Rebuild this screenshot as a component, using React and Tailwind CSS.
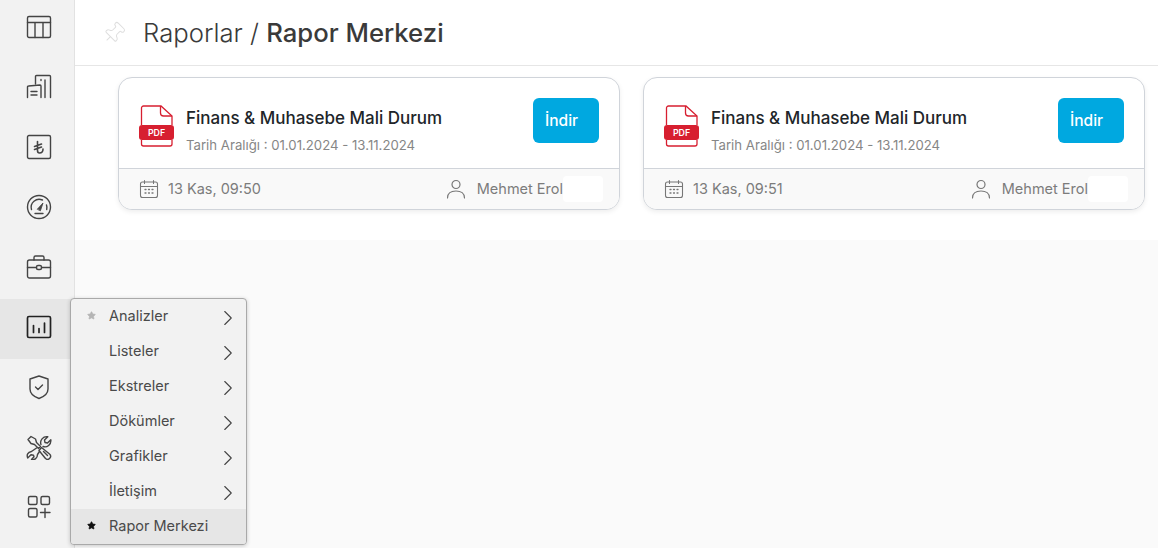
import { ChevronRight, Pin, Star } from 'lucide-react';

const FONT = "font-['Inter','Liberation_Sans',sans-serif]";

const iconProps = {
  width: 26,
  height: 26,
  viewBox: '0 0 26 26',
  fill: 'none',
  stroke: '#444',
  strokeWidth: 1.4,
  strokeLinecap: 'round',
  strokeLinejoin: 'round',
};

function TableIcon() {
  return (
    <svg {...iconProps}>
      <rect x="1.5" y="2.5" width="23" height="21" rx="1.5" />
      <path d="M1.5 8.500h23M9 8.500v15M17 8.500v15" />
    </svg>
  );
}

function BuildingIcon() {
  return (
    <svg {...iconProps}>
      <path d="M9.500 10V2.500a1 1 0 0 1 1-1h13a1 1 0 0 1 1 1V23.500" />
      <path d="M1.500 23.500V13a1 1 0 0 1 1-1l11.500-1a1 1 0 0 1 1 1v11.500" />
      <path d="M5 17.500h6M5 21h6M15 5.500v1M19 6v17.500" />
    </svg>
  );
}

function LiraIcon() {
  return (
    <svg {...iconProps}>
      <rect x="1.5" y="1.500" width="23" height="23" rx="1.5" />
      <path d="M11.500 7.500v9c0 1.800 .8 2.500 2 2.500 2 0 3.500-1.500 3.500-4M8.500 12.500l7-2.500M8.500 15.500l7-2.500" strokeWidth="1.600" />
    </svg>
  );
}

function GaugeIcon() {
  return (
    <svg {...iconProps}>
      <circle cx="13" cy="13" r="11.500" />
      <path d="M5.500 15.500a8 8 0 0 1 11-9.500M20.500 11a8 8 0 0 1 .2 4.500" />
      <path d="M11.500 15l5.500-6-2.500 7.500z" fill="#444" strokeWidth="0.800" />
      <path d="M9 19.500h8" />
    </svg>
  );
}

function BriefcaseIcon() {
  return (
    <svg {...iconProps}>
      <rect x="1.500" y="6" width="23" height="18" rx="2" />
      <path d="M8 6V3.500A1.500 1.500 0 0 1 9.500 2h7A1.500 1.500 0 0 1 18 3.500V6M1.500 13.500h9M15.500 13.500h9" />
      <rect x="10.500" y="11.500" width="5" height="4" rx="1.500" />
    </svg>
  );
}

function ChartIcon() {
  return (
    <svg {...iconProps} strokeWidth="1.700" stroke="#222">
      <rect x="1.500" y="2.500" width="23" height="21" rx="1.500" />
      <path d="M7.500 11.500v7M13 14.500v4M18.500 9v9.500" />
    </svg>
  );
}

function ShieldIcon() {
  return (
    <svg {...iconProps}>
      <path d="M13 2l9 3v10c0 4.500-4.200 7.800-9 9.500C8.200 22.800 4 19.500 4 15V5z" />
      <path d="M9.500 13l2.500 2.500 4.500-4.500" />
    </svg>
  );
}

function ToolsIcon() {
  return (
    <svg {...iconProps}>
      <path d="M2 5.500L5 2.500l4.500 2.500 1 3.500 4 4-2 2-4-4-3.500-1z" />
      <path d="M15.500 13.500l8 6.500a3 3 0 0 1-4 4.500l-6.500-8z" />
      <path d="M17.500 17.500l4 4" />
      <path d="M15 10.500c-1.500-4 2-8.500 6.800-7.800l-3.300 3.300.5 2.500 2.500.5 3.300-3.300c.7 4.800-3.800 8.300-7.800 6.800" />
      <path d="M10.500 14L5.500 17.500c-4 .5-5 3.800-3.800 6.500l3.300-3.300 2.500.5.500 1.500-2.500 2.800c3 .8 6-1.500 6-5l2-3" />
    </svg>
  );
}

function AppsIcon() {
  return (
    <svg {...iconProps}>
      <rect x="2.500" y="2.500" width="8.500" height="8" rx="1.500" />
      <rect x="15" y="2.500" width="8.500" height="8" rx="1.500" />
      <rect x="2.500" y="14.500" width="8.500" height="8.500" rx="1.500" />
      <path d="M14.500 18.500h9.500M19 14.500v9" />
    </svg>
  );
}

function PdfIcon() {
  return (
    <svg width="36" height="44" viewBox="0 0 36 44" fill="none">
      <path d="M2.500 21V4a2 2 0 0 1 2-2H22l11 10v9M2.500 36v4a2 2 0 0 0 2 2h26.500a2 2 0 0 0 2-2v-4" stroke="#d71f30" strokeWidth="1.300" />
      <path d="M21.500 2v7a3 3 0 0 0 3 3H33" stroke="#d71f30" strokeWidth="1.300" />
      <rect x="0" y="21" width="35" height="15" rx="3" fill="#d71f30" />
      <text x="17.500" y="31.800" textAnchor="middle" fontFamily="Inter" fontSize="8.800" fontWeight="600" fill="#fff">PDF</text>
    </svg>
  );
}

function CalendarIcon() {
  return (
    <svg width="20" height="20" viewBox="0 0 20 20" fill="none" stroke="#777" strokeWidth="1.100" strokeLinecap="round">
      <rect x="1.500" y="3" width="17" height="15.500" rx="2" />
      <path d="M1.500 7.500h17M5.500 1.500v3M14.500 1.500v3" />
      <path d="M6 10.500h1M9.500 10.500h1M13 10.500h1M6 14h1M9.500 14h1M13 14h1" strokeWidth="1.300" />
    </svg>
  );
}

function UserIcon() {
  return (
    <svg width="20" height="20" viewBox="0 0 20 20" fill="none" stroke="#777" strokeWidth="1.200" strokeLinecap="round">
      <circle cx="10" cy="5.500" r="4" />
      <path d="M1.500 19c0-4.500 3.500-7 8.500-7s8.500 2.500 8.500 7" />
    </svg>
  );
}

const sideIcons = [
  { Icon: TableIcon },
  { Icon: BuildingIcon },
  { Icon: LiraIcon },
  { Icon: GaugeIcon },
  { Icon: BriefcaseIcon },
  { Icon: ChartIcon, active: true },
  { Icon: ShieldIcon },
  { Icon: ToolsIcon },
  { Icon: AppsIcon },
];

const menuItems = [
  { label: 'Analizler', star: 'gray', arrow: true },
  { label: 'Listeler', arrow: true },
  { label: 'Ekstreler', arrow: true },
  { label: 'Dökümler', arrow: true },
  { label: 'Grafikler', arrow: true },
  { label: 'İletişim', arrow: true },
  { label: 'Rapor Merkezi', star: 'black', active: true },
];

function ReportCard({ time }) {
  return (
    <div className="w-[502px] h-[133px] shrink-0 rounded-[14px] border border-[#d0d4da] bg-white overflow-hidden shadow-[0_2px_5px_rgba(0,0,0,0.07)]">
      <div className="h-[91px] flex items-center px-[20px] border-b border-[#d0d4da]">
        <div className="mt-[6px]"><PdfIcon /></div>
        <div className="ml-[11px] flex-1 mt-[14px]">
          <div className="text-[17px] leading-[20px] font-medium text-[#212529]">Finans &amp; Muhasebe Mali Durum</div>
          <div className="mt-[9px] text-[13.2px] leading-[16px] text-[#868686]">Tarih Aralığı : 01.01.2024 - 13.11.2024</div>
        </div>
        <button className="w-[66px] h-[45px] mt-[-6px] pt-[2px] rounded-[6px] bg-[#00a8e0] text-white text-[15.5px] font-medium text-left pl-[12px]">İndir</button>
      </div>
      <div className="h-[41px] flex items-center bg-[#f9f9f9] pl-[20px] pb-[1px] text-[14.5px] text-[#7c7c7c]">
        <CalendarIcon />
        <span className="ml-[9px]">{time}</span>
        <div className="ml-auto flex items-center mr-[16px]">
          <UserIcon />
          <span className="ml-[11px]">Mehmet Erol</span>
          <div className="w-[40px] h-[26px] rounded bg-white" />
        </div>
      </div>
    </div>
  );
}

export default function App() {
  return (
    <div className={`${FONT} relative w-[1158px] h-[548px] overflow-hidden flex bg-[#fafafa]`}>
      <aside className="w-[75px] shrink-0 h-full bg-[#f2f2f2] border-r border-[#e2e2e2]">
        <div className="flex flex-col mt-[-1px]">
          {sideIcons.map(({ Icon, active }, i) => (
            <div key={i} className={`h-[60px] pb-[4px] pl-[4px] flex items-center justify-center ${active ? 'bg-[#e6e6e6]' : ''}`}>
              <Icon />
            </div>
          ))}
        </div>
      </aside>

      <main className="flex-1 min-w-0">
        <div className="bg-white h-[240px]">
          <header className="h-[66px] border-b border-[#e6e6e6] flex items-center pl-[27px]">
            <Pin size={24} strokeWidth={1} color="#dedede" className="rotate-45" />
            <h1 className="ml-[17px] pt-[1px] text-[25.700px] text-[#3a3a3a] font-light">
              Raporlar / <span className="font-medium">Rapor Merkezi</span>
            </h1>
          </header>
          <div className="flex gap-[23px] pl-[43px] pt-[11px]">
            <ReportCard time="13 Kas, 09:50" />
            <ReportCard time="13 Kas, 09:51" />
          </div>
        </div>
      </main>

      <div className="absolute left-[70px] top-[298px] w-[177px] h-[247px] rounded-[4px] border border-[#a9a9a9] bg-[#f2f2f2] shadow-[0_1px_4px_rgba(0,0,0,0.2)] overflow-hidden">
        {menuItems.map((item) => (
          <div key={item.label} className={`h-[35px] flex items-center relative pl-[38px] pb-[2px] text-[14.500px] text-[#4a4a4a] ${item.active ? 'bg-[#e6e6e6]' : ''}`}>
            {item.star && (
              <Star
                size={9}
                className="absolute left-[16px] top-[12px]"
                fill={item.star === 'gray' ? '#b5b5b5' : '#111'}
                color={item.star === 'gray' ? '#b5b5b5' : '#111'}
              />
            )}
            <span>{item.label}</span>
            {item.arrow && (
              <ChevronRight size={26} strokeWidth={1} color="#444" className="absolute right-[5px] top-[6px]" />
            )}
          </div>
        ))}
      </div>
    </div>
  );
}
